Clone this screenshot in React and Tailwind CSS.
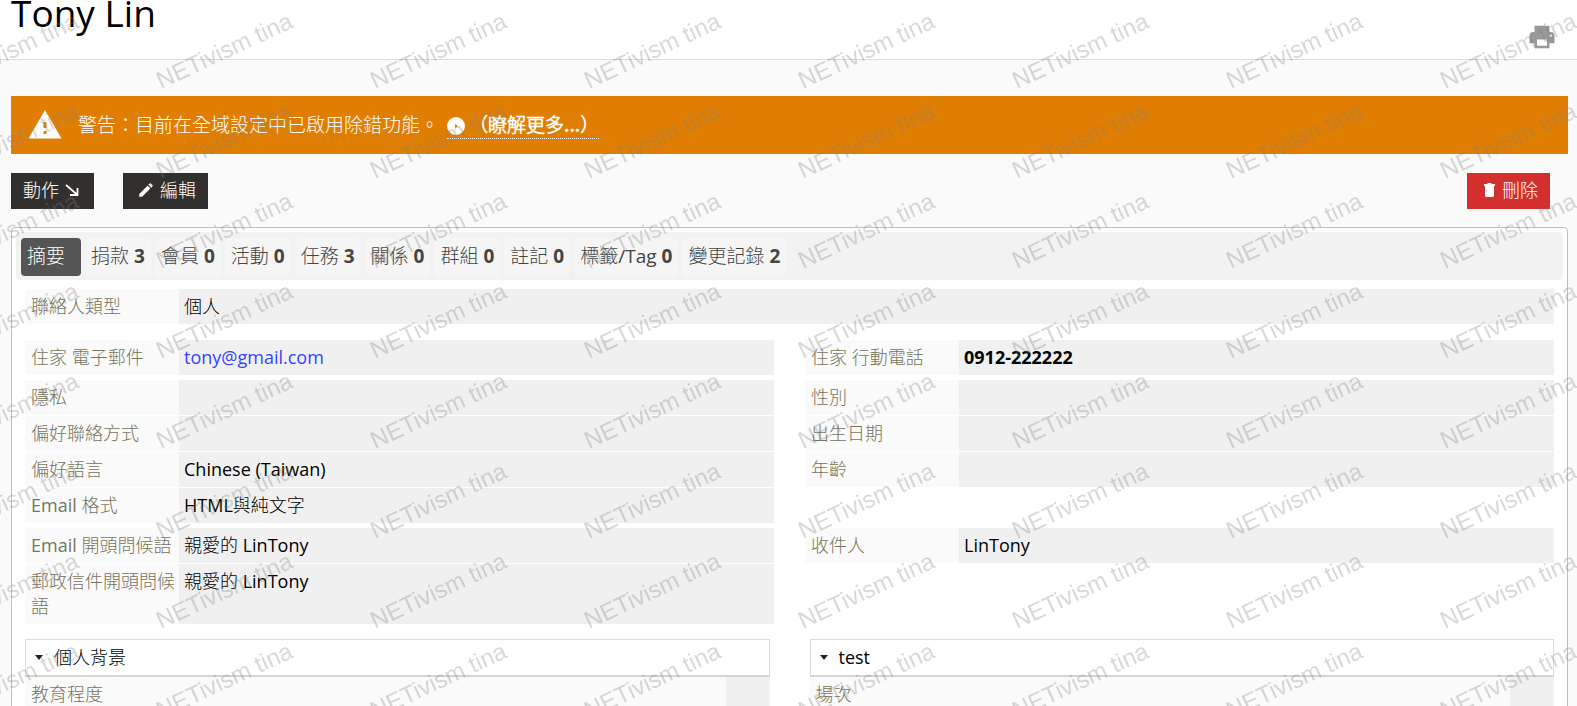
import React, { useState } from 'react';
import { MdEdit, MdWarning } from 'react-icons/md';

const tabs = [
  { id: 'summary', label: '摘要' },
  { id: 'contribute', label: '捐款', count: 3 },
  { id: 'member', label: '會員', count: 0 },
  { id: 'activity', label: '活動', count: 0 },
  { id: 'task', label: '任務', count: 3 },
  { id: 'rel', label: '關係', count: 0 },
  { id: 'group', label: '群組', count: 0 },
  { id: 'note', label: '註記', count: 0 },
  { id: 'tag', label: '標籤/Tag', count: 0 },
  { id: 'log', label: '變更記錄', count: 2 },
];

const contactType = [{ label: '聯絡人類型', value: '個人' }];

const detailGroups = [
  {
    id: 'reach',
    left: [
      {
        label: '住家 電子郵件',
        value: <a href="mailto:tony@gmail.com" className="text-[#3344ff]">tony@gmail.com</a>,
      },
    ],
    right: [{ label: '住家 行動電話', value: <strong className="font-bold">0912-222222</strong> }],
  },
  {
    id: 'preferences',
    left: [
      { label: '隱私' },
      { label: '偏好聯絡方式' },
      { label: '偏好語言', value: 'Chinese (Taiwan)' },
      { label: 'Email 格式', value: 'HTML與純文字' },
    ],
    right: [{ label: '性別' }, { label: '出生日期' }, { label: '年齡' }],
  },
  {
    id: 'greetings',
    left: [
      { label: 'Email 開頭問候語', value: '親愛的 LinTony' },
      { label: '郵政信件開頭問候語', value: '親愛的 LinTony' },
    ],
    right: [{ label: '收件人', value: 'LinTony' }],
  },
];

const customGroups = [
  { id: 'background', title: '個人背景', field: '教育程度' },
  { id: 'test', title: 'test', field: '場次' },
];

const DetailTable = ({ rows }) => (
  <table className="w-full table-fixed border-separate border-spacing-0 text-left">
    <tbody>
      {rows.map((row) => (
        <tr key={row.label} className="align-top">
          <th scope="row" className="w-[154px] border-b border-white bg-[#fafafa] py-[5px] pl-[6px] pr-1 font-normal text-[#75755c]">
            {row.label}
          </th>
          <td className="border-b border-white bg-[#f0f0f0] px-[5px] py-[5px]">{row.value}</td>
        </tr>
      ))}
    </tbody>
  </table>
);

const CustomGroup = ({ title, field }) => {
  const [open, setOpen] = useState(true);

  return (
    <section>
      <button
        type="button"
        aria-expanded={open}
        onClick={() => setOpen(!open)}
        className="flex w-full items-center gap-[11px] border border-b-2 border-[#dcdcdc] border-b-[#d6d6cc] bg-white py-[5px] pl-[9px] text-left"
      >
        <svg viewBox="0 0 8 5" className="h-[5px] w-2" fill="#222">
          <path d="M0 0h8L4 5z" />
        </svg>
        {title}
      </button>
      {open && (
        <table className="w-full table-fixed border-separate border-spacing-0 text-left">
          <tbody>
            <tr className="align-top">
              <th scope="row" className="bg-[#fafafa] px-[6px] py-[5px] font-normal text-[#75755c]">{field}</th>
              <td className="w-11 bg-[#f0f0f0]"></td>
            </tr>
          </tbody>
        </table>
      )}
    </section>
  );
};

const Watermark = () => (
  <svg className="pointer-events-none absolute inset-0 h-full w-full" aria-hidden="true">
    <defs>
      <pattern id="watermark" x="151" y="5" width="214" height="90" patternUnits="userSpaceOnUse">
        <text
          x="0"
          y="0"
          transform="translate(10 84) rotate(-25)"
          fontFamily="Liberation Sans, Arial, sans-serif"
          fontSize="24"
          fill="#808080"
          fillOpacity="0.3"
        >
          NETivism tina
        </text>
      </pattern>
    </defs>
    <rect width="100%" height="100%" fill="url(#watermark)" />
  </svg>
);

const App = () => {
  const [activeTab, setActiveTab] = useState('summary');

  return (
    <div className="relative min-h-screen overflow-hidden bg-[#fafafa] font-['Open_Sans','Noto_Sans_CJK_TC_Light','Noto_Sans_CJK_TC',sans-serif] text-[18px] leading-[25px] text-black">
      {/* Page title */}
      <header className="flex min-h-[60px] items-end justify-between border-b border-[#dcdcdc] bg-white pb-[7px] pl-[11px] pr-5">
        <h1 className="self-start text-[37px] leading-[25px]">Tony Lin</h1>
        <button type="button" aria-label="列印" className="text-[#999]">
          <svg viewBox="0 0 24 24" className="h-[30px] w-[30px]" fill="currentColor">
            <path
              fillRule="evenodd"
              d="M6 3h12v5H6zM5 8h14a3 3 0 0 1 3 3v6h-4v4H6v-4H2v-6a3 3 0 0 1 3-3zM8 14v5h8v-5zM19 10a1 1 0 1 0 0 2 1 1 0 0 0 0-2z"
            />
          </svg>
        </button>
      </header>

      <main className="pl-[11px] pr-[9px] pt-9">
        {/* Debug warning */}
        <div className="flex min-h-[58px] items-center bg-[#e07e04] px-4 text-[19px] text-white">
          <MdWarning className="mr-[15px] h-9 w-9 shrink-0" />
          <p>
            警告：目前在全域設定中已啟用除錯功能。
            <a href="#debug" className="ml-2 border-b border-dotted border-white font-bold">
              <svg viewBox="0 0 18 18" className="mr-1 inline-block h-[18px] w-[18px] align-[-3px]" fill="white">
                <path fillRule="evenodd" d="M9 0a9 9 0 1 0 0 18A9 9 0 0 0 9 0zM8 7l3 2-3 2z" />
              </svg>
              （瞭解更多...）
            </a>
          </p>
        </div>

        {/* Actions */}
        <div className="mt-[19px] flex items-center pr-[18px] text-white">
          <button type="button" className="flex h-9 items-center gap-[5px] bg-[#32302f] px-3 pb-[2px]">
            動作
            <svg viewBox="0 0 18 18" className="h-[18px] w-[18px]" fill="none" stroke="white" strokeWidth="1.800">
              <path d="M2 4l11 9.500M13.500 7v7H6" />
            </svg>
          </button>
          <button type="button" className="ml-[29px] flex h-9 items-center gap-[5px] bg-[#32302f] pb-[2px] pl-[14px] pr-3">
            <MdEdit className="h-[18px] w-[18px]" />
            編輯
          </button>
          <button type="button" className="ml-auto flex h-9 items-center gap-1 bg-[#d32f2f] pb-[2px] pl-[13px] pr-3">
            <svg viewBox="0 0 18 18" className="h-[18px] w-[18px]" fill="white">
              <path d="M5 5h9v9.500a1.500 1.500 0 0 1-1.500 1.500h-6A1.500 1.500 0 0 1 5 14.500zM4 3h3l1-1h3l1 1h3v2H4z" />
            </svg>
            刪除
          </button>
        </div>

        {/* Contact record */}
        <div className="mt-[18px] rounded border border-[#bfbfbf] bg-white p-1">
          <nav className="flex flex-wrap gap-1 rounded bg-[#f2f2f2] px-[5px] pb-1 pt-[6px] text-[19px]">
            {tabs.map((tab) => (
              <button
                key={tab.id}
                type="button"
                onClick={() => setActiveTab(tab.id)}
                className={
                  tab.id === activeTab
                    ? 'flex min-h-[38px] min-w-[60px] items-center rounded bg-[#555] px-[6px] pb-[2px] text-white'
                    : 'flex min-h-[38px] items-center gap-[5px] rounded bg-[#f5f5f5] px-[6px] pb-[2px] text-[#444]'
                }
              >
                {tab.label}
                {tab.count !== undefined && <b className="font-bold">{tab.count}</b>}
              </button>
            ))}
          </nav>

          <div className="px-[9px] pt-[9px]">
            <DetailTable rows={contactType} />
            <div className="mt-[15px] flex flex-col gap-1">
              {detailGroups.map((group) => (
                <div key={group.id} className="grid grid-cols-2 items-start gap-[31px]">
                  <DetailTable rows={group.left} />
                  <DetailTable rows={group.right} />
                </div>
              ))}
            </div>
            <div className="mt-[14px] grid grid-cols-2 gap-10">
              {customGroups.map((group) => (
                <CustomGroup key={group.id} title={group.title} field={group.field} />
              ))}
            </div>
          </div>
        </div>
      </main>

      <Watermark />
    </div>
  );
};

export default App;
